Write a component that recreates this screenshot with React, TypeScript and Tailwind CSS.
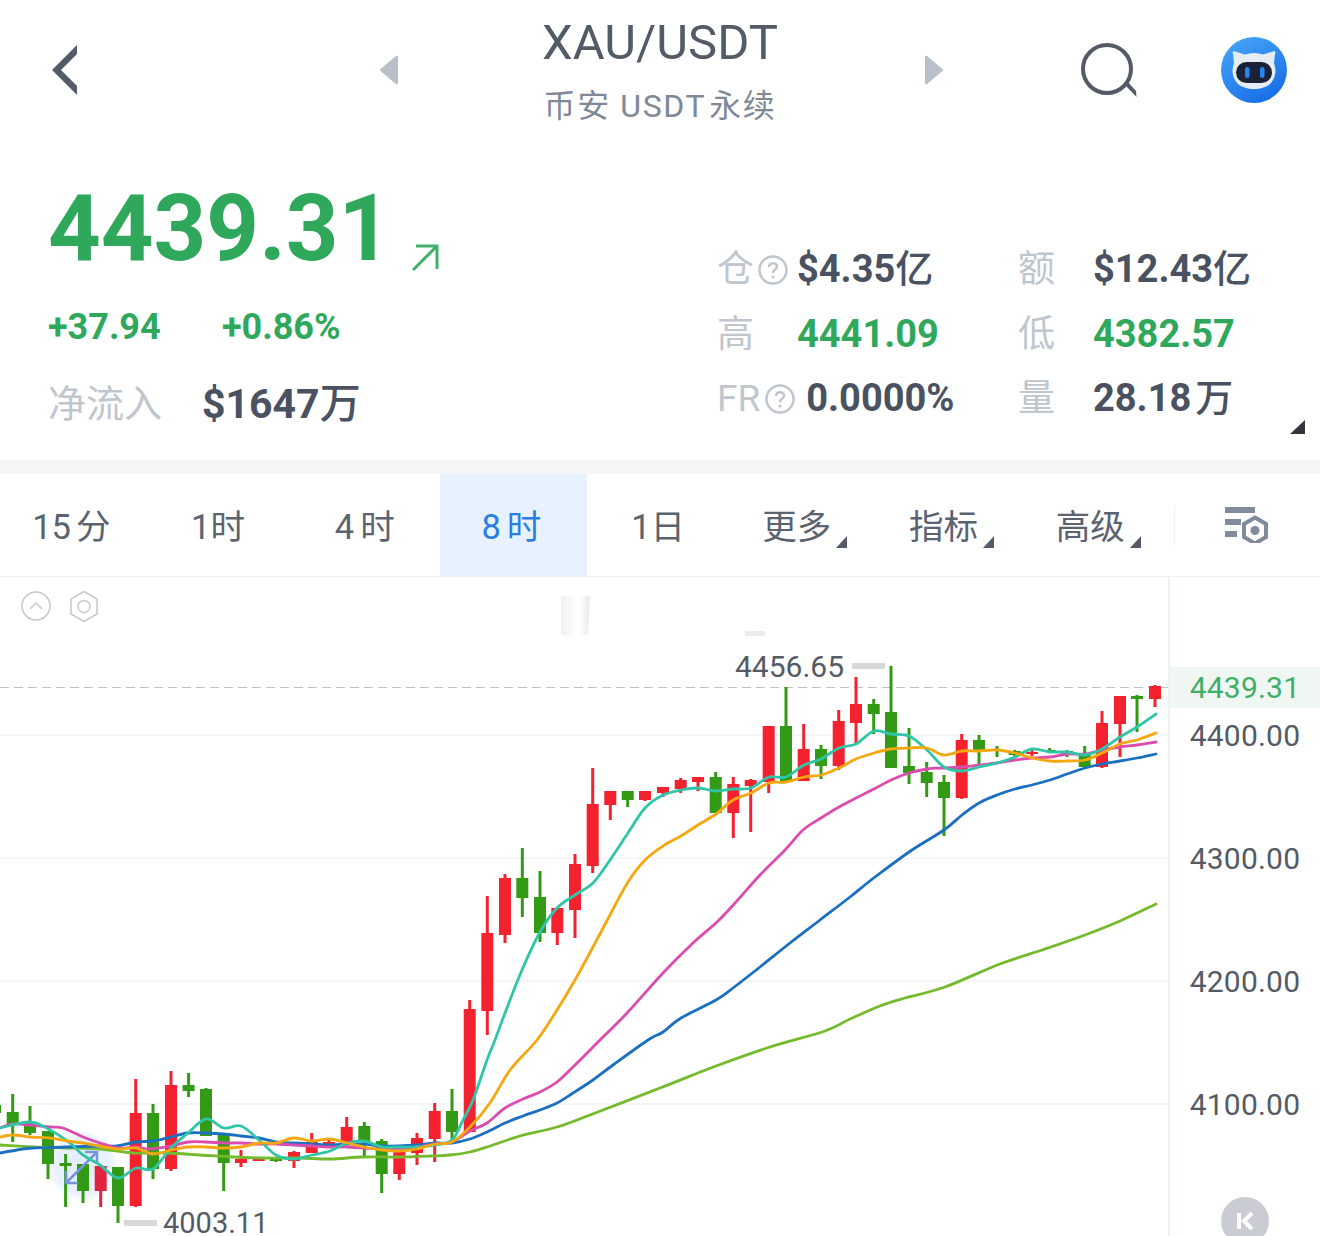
import React from "react";

const FONT = { fontFamily: 'Roboto, "Noto Sans CJK SC", sans-serif' };

const RED = "#f4212e";
const GREEN = "#329a15";

// x, up (red), wick top, wick bottom, body top, body bottom: in page pixels
const candles: [number, boolean, number, number, number, number][] = [
  [-5, false, 1100, 1118, 1105, 1113],
  [12.7, false, 1094, 1142, 1112, 1124],
  [30, false, 1106, 1135, 1123, 1133],
  [48, false, 1131, 1179, 1131, 1164],
  [65.6, false, 1154, 1207, 1163, 1166],
  [83, false, 1164, 1203, 1164, 1191],
  [100.7, true, 1166, 1207, 1166, 1191],
  [118, false, 1167, 1223, 1167, 1206],
  [135.7, true, 1079, 1207, 1113, 1206],
  [153, false, 1104, 1179, 1113, 1169],
  [171, true, 1071, 1171, 1085, 1169],
  [188.6, false, 1073, 1097, 1085, 1091],
  [206, false, 1088, 1136, 1089, 1136],
  [223.7, false, 1135, 1191, 1135, 1163],
  [241, true, 1150, 1167, 1159, 1163],
  [258.7, true, 1158, 1161, 1159, 1160],
  [276, false, 1157, 1162, 1157, 1161],
  [294, true, 1151, 1168, 1152, 1161],
  [311.7, true, 1133, 1153, 1142, 1153],
  [329, true, 1138, 1147, 1142, 1145],
  [346.7, true, 1117, 1143, 1127, 1143],
  [364.3, false, 1122, 1158, 1126, 1142],
  [381.7, false, 1139, 1193, 1141, 1174],
  [399.3, true, 1152, 1180, 1152, 1174],
  [417, true, 1133, 1165, 1138, 1153],
  [434.7, true, 1103, 1162, 1111, 1139],
  [452, false, 1089, 1140, 1111, 1132],
  [469.7, true, 1000, 1132, 1009, 1132],
  [487.3, true, 896, 1035, 933, 1011],
  [505, true, 874, 943, 878, 935],
  [522.3, false, 848, 917, 878, 898],
  [540, false, 871, 942, 897, 933],
  [557.3, true, 908, 945, 908, 933],
  [575, true, 854, 938, 864, 910],
  [592.7, true, 768, 873, 804, 866],
  [610.3, true, 791, 820, 791, 805],
  [627.7, false, 791, 807, 791, 800],
  [645, true, 791, 801, 791, 800],
  [663, true, 787, 797, 787, 793],
  [680.7, true, 778, 793, 780, 789],
  [698, true, 777, 791, 777, 782],
  [715.7, false, 772, 813, 777, 813],
  [733.3, true, 777, 838, 784, 813],
  [750.7, true, 779, 832, 780, 786],
  [768.7, true, 726, 793, 726, 782],
  [786, false, 687, 782, 726, 781],
  [803.7, true, 724, 781, 749, 781],
  [821, false, 745, 779, 749, 766],
  [838.7, true, 710, 770, 721, 766],
  [856, true, 677, 743, 704, 723],
  [873.7, false, 699, 734, 704, 714],
  [891, false, 666, 768, 712, 768],
  [909, false, 728, 784, 766, 773],
  [926.7, false, 762, 797, 772, 783],
  [944, false, 775, 836, 782, 798],
  [961.7, true, 734, 799, 740, 798],
  [979, false, 735, 765, 740, 751],
  [997, false, 746, 757, 749, 751],
  [1014.7, false, 750, 756, 751, 755],
  [1032, true, 748, 756, 752, 754],
  [1049.7, false, 748, 753, 750, 752],
  [1067, false, 750, 757, 751, 754],
  [1084.7, false, 746, 767, 754, 767],
  [1102, true, 711, 768, 723, 767],
  [1120, true, 696, 757, 696, 724],
  [1137, false, 695, 732, 696, 699],
  [1155, true, 685, 707, 686, 699],
];

const lime =
  "0,1145 33,1147 67,1148 100,1149 133,1153 167,1153 200,1155 233,1157 267,1158 300,1158 330,1159 363,1157 397,1157 430,1156 450,1155 470,1152 490,1146 520,1136 557,1127 590,1115 660,1088 716,1066 770,1047 825,1031 850,1019 880,1006 905,998 945,987 1000,964 1045,949 1085,935 1120,921 1156,904";
const blue =
  "0,1153 17,1150 33,1148 67,1147 100,1146 117,1146 136,1142 153,1141 171,1137 188,1133 206,1133 224,1134 241,1136 259,1138 276,1142 294,1143 312,1144 330,1145 347,1144 364,1144 382,1146 399,1146 417,1145 435,1143 452,1143 470,1139 487,1132 505,1123 523,1116 540,1110 557,1103 573,1093 593,1080 613,1065 648,1040 663,1032 681,1018 716,1000 733,988 760,967 790,943 820,920 850,897 875,877 912,850 944,830 962,815 979,803 997,795 1015,789 1032,785 1050,780 1067,774 1085,768 1102,764 1120,761 1137,758 1156,754";
const pink =
  "0,1128 13,1124 30,1125 50,1127 63,1128 83,1137 100,1143 118,1148 136,1147 150,1149 171,1146 188,1142 206,1142 224,1143 241,1143 259,1144 276,1144 294,1145 312,1146 330,1147 347,1147 364,1148 382,1149 399,1149 417,1147 435,1144 452,1142 470,1131 487,1123 505,1108 523,1099 540,1092 557,1082 573,1067 600,1040 627,1013 663,973 693,943 717,922 735,903 760,875 785,850 803,830 821,818 839,807 856,798 874,789 891,780 909,773 927,769 944,768 962,767 979,765 997,763 1015,760 1032,758 1050,757 1067,754 1085,754 1102,750 1120,747 1137,745 1156,742";
const teal =
  "0,1128 30,1122 50,1130 70,1143 83,1155 100,1165 118,1178 136,1168 153,1169 171,1148 188,1133 206,1119 224,1128 241,1126 259,1140 276,1155 294,1159 312,1155 330,1151 347,1143 364,1141 382,1147 399,1147 417,1147 435,1145 452,1140 463,1120 473,1100 487,1060 495,1040 505,1013 522,970 540,932 557,908 575,895 593,883 610,860 628,833 645,808 663,795 681,790 698,788 716,791 733,789 751,788 769,777 786,777 804,765 821,759 839,748 856,744 874,731 891,734 909,736 927,750 944,767 962,771 979,767 997,763 1015,757 1032,749 1050,752 1067,752 1085,755 1102,749 1120,737 1137,727 1156,714";
const orange =
  "0,1137 13,1135 30,1137 50,1138 67,1141 83,1143 100,1146 118,1149 136,1148 153,1154 171,1150 188,1147 206,1147 224,1148 241,1147 259,1143 276,1143 294,1138 312,1141 330,1139 347,1143 364,1147 382,1150 399,1151 417,1149 435,1144 452,1142 470,1127 490,1103 510,1070 537,1040 557,1010 575,980 593,947 610,915 628,882 645,860 663,846 681,836 698,825 716,814 733,800 751,793 769,783 786,782 804,777 821,775 839,768 856,759 874,753 891,749 909,748 927,748 944,755 962,751 979,751 997,750 1015,753 1032,758 1050,761 1067,761 1085,760 1102,753 1120,744 1137,740 1156,733";

const lines: [string, string][] = [
  [lime, "#73ba2c"],
  [blue, "#1a6fc0"],
  [pink, "#dc4cae"],
  [teal, "#2fc6a8"],
  [orange, "#f5a70f"],
];

// catmull-rom through the sampled points, so the averages bend like the reference
const smooth = (pts: string) => {
  const p = pts.split(" ").map((s) => s.split(",").map(Number));
  let d = `M${p[0][0]} ${p[0][1]}`;
  for (let i = 0; i < p.length - 1; i++) {
    const a = p[Math.max(i - 1, 0)];
    const b = p[i];
    const c = p[i + 1];
    const e = p[Math.min(i + 2, p.length - 1)];
    d += `C${b[0] + (c[0] - a[0]) / 6} ${b[1] + (c[1] - a[1]) / 6} ${c[0] - (e[0] - b[0]) / 6} ${c[1] - (e[1] - b[1]) / 6} ${c[0]} ${c[1]}`;
  }
  return d;
};

const Help = () => (
  <svg width="30" height="30" viewBox="0 0 30 30" className="shrink-0">
    <circle cx="15" cy="15" r="13.5" fill="none" stroke="#c0c6ce" strokeWidth="2.5" />
    <path
      d="M11 12c0-5 8-5 8-.5 0 3-4 3-4 6.5"
      fill="none"
      stroke="#c0c6ce"
      strokeWidth="2.4"
    />
    <circle cx="15" cy="22" r="1.6" fill="#c0c6ce" />
  </svg>
);

const Corner = () => (
  <svg width="11" height="12" viewBox="0 0 11 12" className="shrink-0 self-end mb-[1px]">
    <path d="M11 0v12H0z" fill="#555c68" />
  </svg>
);

const tabs: { num?: string; text: string; gap?: string }[] = [
  { num: "15", text: "分", gap: "ml-[5px]" },
  { num: "1", text: "时", gap: "ml-[0px]" },
  { num: "4", text: "时", gap: "ml-[6px]" },
  { num: "8", text: "时", gap: "ml-[6px]" },
  { num: "1", text: "日", gap: "ml-[0px]" },
  { text: "更多" },
  { text: "指标" },
  { text: "高级" },
];

const Label = ({ children }: { children: React.ReactNode }) => (
  <span className="text-[37px] leading-[44px] text-[#c0c6ce]">{children}</span>
);

const Value = ({ children, green }: { children: React.ReactNode; green?: boolean }) => (
  <span className={`text-[38px] font-bold ${green ? "text-[#2fa85b]" : "text-[#4a5261]"}`}>
    {children}
  </span>
);

const Unit = ({ children }: { children: React.ReactNode }) => (
  <span className="font-medium">{children}</span>
);

export default function App() {
  return (
    <div style={FONT} className="w-[1320px] h-[1236px] overflow-hidden bg-white">
      {/* top bar */}
      <div className="flex items-center h-[140px] pl-[52px]">
        <svg width="26" height="50" viewBox="0 0 26 50" className="shrink-0">
          <path d="M25 0v9L9 25l16 16v9L0 25z" fill="#535b68" />
        </svg>
        <svg width="18" height="30" viewBox="0 0 18 30" className="shrink-0 ml-[302px]">
          <path d="M16 1c1-.6 2 0 2 1v26c0 1-1 1.600-2 1L.5 16c-.7-.5-.7-1.500 0-2z" fill="#b8c0ca" />
        </svg>
        <div className="w-[400px] ml-[62px] flex flex-col items-center">
          <div className="text-[49px] leading-[56px] text-[#535b66]">XAU/USDT</div>
          <div className="text-[32px] leading-[40px] mt-[15px] tracking-[1.6px] text-[#7f8896] whitespace-pre">
            币安 USDT<span className="ml-[3px]">永续</span>
          </div>
        </div>
        <svg width="18" height="30" viewBox="0 0 18 30" className="shrink-0 ml-[65px]">
          <path d="M2 1C1 .4 0 1 0 2v26c0 1 1 1.600 2 1l15.500-13c.7-.5.7-1.500 0-2z" fill="#b8c0ca" />
        </svg>
        <svg width="56" height="56" viewBox="0 0 56 56" className="shrink-0 ml-[138px]">
          <circle cx="26" cy="27" r="24" fill="none" stroke="#545b66" strokeWidth="4" />
          <path d="M43 42l3-3 9 10 .5 6z" fill="#545b66" />
        </svg>
        <svg width="66" height="66" viewBox="0 0 66 66" className="shrink-0 ml-[84px]">
          <defs>
            <linearGradient id="av" x1="0.2" y1="0" x2="0.8" y2="1">
              <stop offset="0" stopColor="#45a5f7" />
              <stop offset="1" stopColor="#156be6" />
            </linearGradient>
          </defs>
          <circle cx="33" cy="33" r="33" fill="url(#av)" />
          <path
            d="M12 17c-1-2 0-3 2-2.500l10 3c6-2 12-2 18 0l10-3c2-.5 3 .5 2 2.500l-1 9c3 9 1 15-3 20-8 8-26 8-34 0-4-5-6-11-3-20z"
            fill="#e6ecf3"
          />
          <rect x="15" y="25" width="36" height="21" rx="10.500" fill="#1a2238" />
          <rect x="24" y="30" width="4.500" height="11" rx="2.200" fill="#2486f2" />
          <rect x="39" y="30" width="4.500" height="11" rx="2.200" fill="#2486f2" />
        </svg>
      </div>

      {/* quote */}
      <div className="relative flex h-[320px]">
        <div className="w-[717px] pl-[48px] pt-[39px] shrink-0">
          <div className="flex items-start">
            <span className="text-[92px] leading-[100px] font-bold text-[#2fa85b]">4439.31</span>
            <svg width="30" height="30" viewBox="0 0 30 30" className="ml-[19px] mt-[63px]">
              <path d="M3 28 27 4M6 4h21v23" fill="none" stroke="#41b06b" strokeWidth="3" />
            </svg>
          </div>
          <div className="flex mt-[28px] text-[36px] leading-[40px] font-bold text-[#2fa85b]">
            <span className="w-[174px]">+37.94</span>
            <span>+0.86%</span>
          </div>
          <div className="flex items-center mt-[33px]">
            <span className="w-[154px] text-[38px] leading-[48px] text-[#c0c6ce]">净流入</span>
            <span className="text-[41px] leading-[48px] font-bold text-[#4a5261]">
              $1647<Unit>万</Unit>
            </span>
          </div>
        </div>
        <div className="pt-[97px]">
          <div className="flex items-center h-[65px]">
            <div className="flex items-center w-[301px]">
              <Label>仓</Label>
              <span className="ml-[4px]">
                <Help />
              </span>
              <span className="ml-[9px]">
                <Value>
                  $4.35<Unit>亿</Unit>
                </Value>
              </span>
            </div>
            <span className="w-[75px]">
              <Label>额</Label>
            </span>
            <Value>
              $12.43<Unit>亿</Unit>
            </Value>
          </div>
          <div className="flex items-center h-[65px]">
            <div className="flex items-center w-[301px]">
              <span className="w-[80px]">
                <Label>高</Label>
              </span>
              <Value green>4441.09</Value>
            </div>
            <span className="w-[75px]">
              <Label>低</Label>
            </span>
            <Value green>4382.57</Value>
          </div>
          <div className="flex items-center h-[63px]">
            <div className="flex items-center w-[301px]">
              <Label>FR</Label>
              <span className="ml-[5px]">
                <Help />
              </span>
              <span className="ml-[11px]">
                <Value>0.0000%</Value>
              </span>
            </div>
            <span className="w-[75px]">
              <Label>量</Label>
            </span>
            <Value>
              28.18<span className="ml-[4px] font-medium">万</span>
            </Value>
          </div>
        </div>
        <svg width="15" height="14" viewBox="0 0 15 14" className="absolute left-[1290px] top-[280px]">
          <path d="M15 0v14H0z" fill="#33373d" />
        </svg>
      </div>

      <div className="h-[14px] bg-[#f5f6f8]" />

      {/* period tabs */}
      <div className="flex items-stretch h-[103px] border-b border-[#eef0f3]">
        {tabs.map((t, i) => (
          <div
            key={i}
            className={`w-[146.7px] flex items-center justify-center text-[34.5px] pr-[4px] ${
              i === 3 ? "bg-[#e7f2fe] text-[#2b7fe0]" : "text-[#5b636f]"
            }`}
          >
            <span className="flex items-center gap-[5px] h-[42px] mt-[5px] whitespace-pre">
              <span>
                {t.num}
                <span className={t.gap}>{t.text}</span>
              </span>
              {i > 4 && <Corner />}
            </span>
          </div>
        ))}
        <div className="w-px h-[40px] self-center bg-[#f0f1f3]" />
        <div className="flex items-center pl-[50px]">
          <svg width="44" height="36" viewBox="0 0 44 36">
            <rect x="0" y="0" width="30" height="6" fill="#808b9c" />
            <rect x="0" y="12" width="16" height="6" fill="#808b9c" />
            <rect x="0" y="24" width="12" height="6" fill="#808b9c" />
            <path
              d="M30 10.500 41 17v13l-11 6.500L19 30V17z"
              fill="#fff"
              stroke="#808b9c"
              strokeWidth="4"
            />
            <circle cx="30" cy="23.500" r="4.500" fill="#808b9c" />
          </svg>
        </div>
      </div>

      {/* chart */}
      <div className="relative flex h-[659px] overflow-hidden">
        <div className="w-[1168px] shrink-0">
          <svg width="1168" height="659" viewBox="0 577 1168 659" className="block">
            <defs>
              <radialGradient id="halo">
                <stop offset="0" stopColor="#e0ecfb" />
                <stop offset="0.8" stopColor="#eaf2fc" />
                <stop offset="1" stopColor="#ffffff" />
              </radialGradient>
              <linearGradient id="mark" x1="0" y1="0" x2="1" y2="0">
                <stop offset="0" stopColor="#f1f1f3" />
                <stop offset="0.6" stopColor="#ffffff" />
                <stop offset="1" stopColor="#e9e9eb" />
              </linearGradient>
            </defs>
            {[735, 858, 981, 1104].map((y) => (
              <line key={y} x1="0" x2="1168" y1={y} y2={y} stroke="#f2f3f6" strokeWidth="1.5" />
            ))}
            <line x1="0" x2="1168" y1="687.500" y2="687.500" stroke="#bfc1c4" strokeDasharray="9 5" />

            {/* faded watermark */}
            <path d="M561 596h29l-2 38q-13 6-27 0z" fill="url(#mark)" />
            <rect x="745" y="631" width="20" height="5" fill="#ececee" />

            <circle cx="83" cy="1166" r="36" fill="url(#halo)" />

            {candles.map(([x, up, wt, wb, bt, bb]) => (
              <g key={x} fill={x === 100.7 ? "#e0243f" : up ? RED : GREEN}>
                <rect x={x - 1.5} y={wt} width="3" height={wb - wt} />
                <rect x={x - 6} y={bt} width="12" height={Math.max(bb - bt, 2)} />
              </g>
            ))}

            <path
              d="M66 1183 97 1152M66 1171v12h12M85 1152h12v12"
              fill="none"
              stroke="#7494dc"
              strokeWidth="2.500"
            />

            {lines.map(([pts, color]) => (
              <path
                key={color}
                d={smooth(pts)}
                fill="none"
                stroke={color}
                strokeWidth="2.800"
                strokeLinejoin="round"
                strokeLinecap="round"
              />
            ))}

            <rect x="852" y="663" width="33" height="6" fill="#d8d8d8" />
            <rect x="124" y="1220" width="33" height="6" fill="#d8d8d8" />
          </svg>
        </div>

        {/* chart tools */}
        <svg width="80" height="32" viewBox="0 0 80 32" className="absolute left-[21px] top-[13px]">
          <circle cx="15" cy="16" r="14" fill="none" stroke="#c5c9d0" strokeWidth="1.500" />
          <path d="M9 19l6-6 6 6" fill="none" stroke="#c5c9d0" strokeWidth="1.500" />
          <path d="M63 1.500 76 9v15l-13 7.500L50 24V9z" fill="none" stroke="#c5c9d0" strokeWidth="1.500" />
          <circle cx="63" cy="16.500" r="6" fill="none" stroke="#c5c9d0" strokeWidth="1.500" />
        </svg>

        <span className="absolute left-[735px] top-[73px] text-[30px] leading-[34px] text-[#555b66]">
          4456.65
        </span>
        <span className="absolute left-[163px] top-[633px] text-[29px] leading-[26px] text-[#555b66]">
          4003.11
        </span>

        {/* price axis */}
        <div className="relative flex-1 border-l-2 border-[#edf1fa] pt-[97px] text-[30px] tracking-[0.2px] text-[#555b66]">
          {["4400.00", "4300.00", "4200.00", "4100.00"].map((v) => (
            <div key={v} className="h-[123px] flex items-center justify-center">
              {v}
            </div>
          ))}
          <div className="absolute left-0 right-0 top-[90px] h-[41px] flex items-center justify-center bg-[#f0f7f3] text-[#3fae68]">
            4439.31
          </div>
          <svg width="48" height="48" viewBox="0 0 48 48" className="absolute left-[51px] top-[620px]">
            <circle cx="24" cy="24" r="24" fill="#c9cdd3" />
            <rect x="16" y="16" width="4" height="16" fill="#fff" />
            <path d="M31 16l-8 8 8 8" fill="none" stroke="#fff" strokeWidth="4" />
          </svg>
        </div>
      </div>
    </div>
  );
}
